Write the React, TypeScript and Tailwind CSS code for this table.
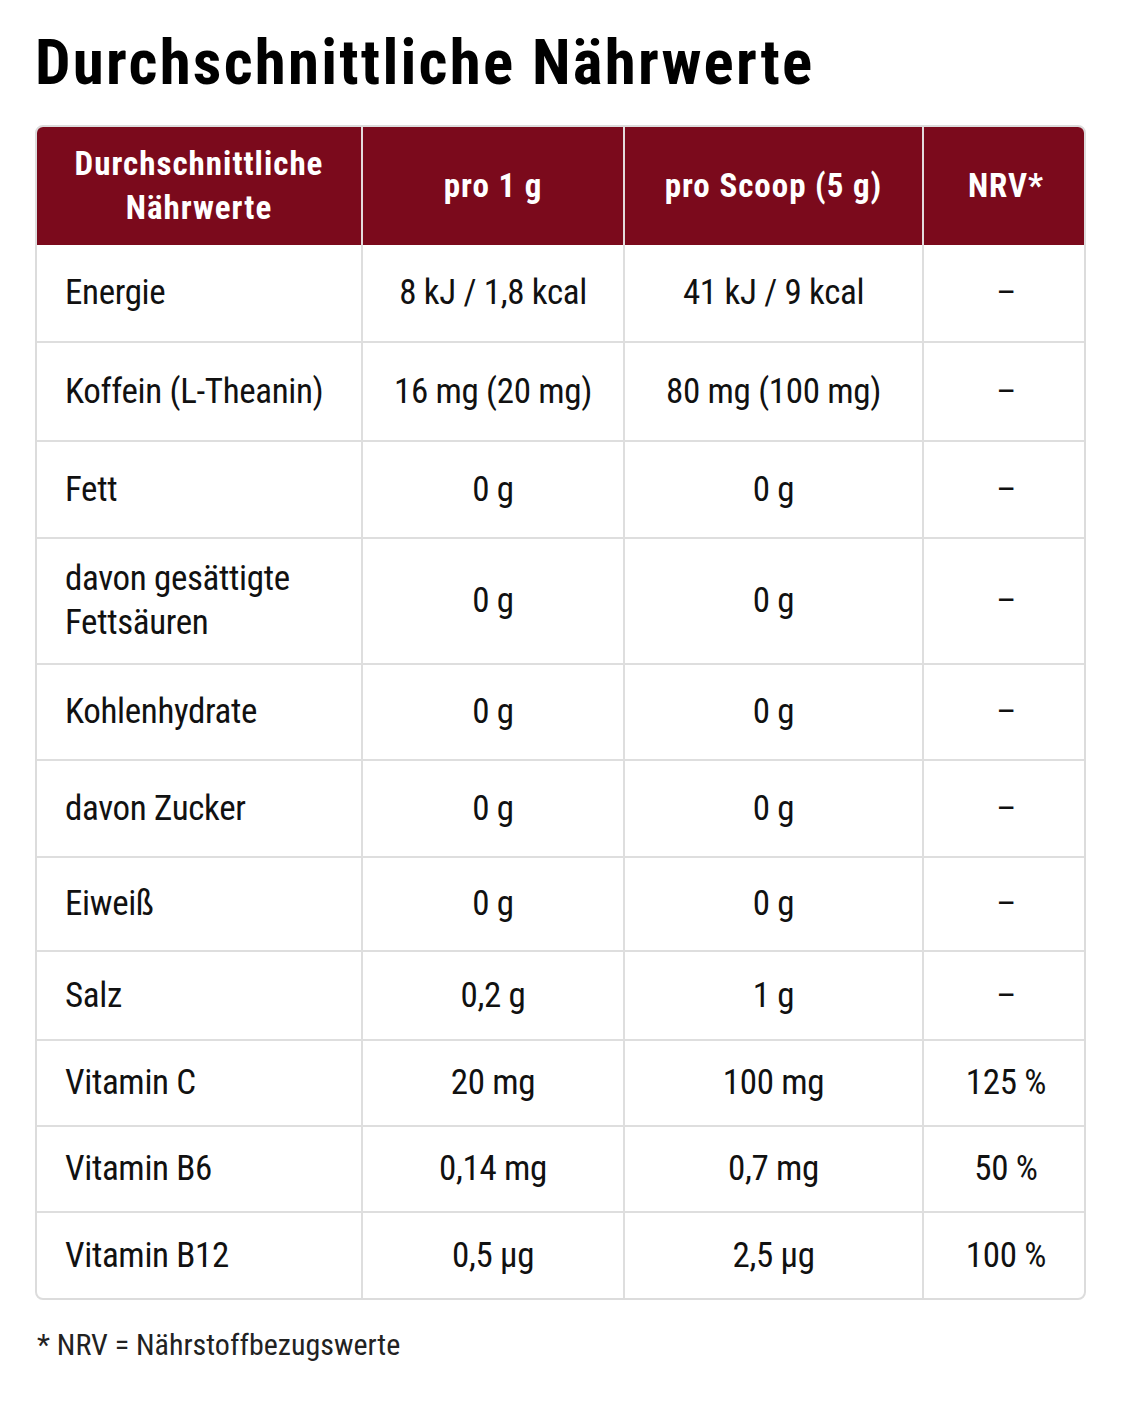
const rows = [
  { name: "Energie", g1: "8 kJ / 1,8 kcal", g5: "41 kJ / 9 kcal", nrv: "–", h: "h-[96px]" },
  { name: "Koffein (L-Theanin)", g1: "16 mg (20 mg)", g5: "80 mg (100 mg)", nrv: "–", h: "h-[99px]" },
  { name: "Fett", g1: "0 g", g5: "0 g", nrv: "–", h: "h-[97px]" },
  { name: "davon gesättigte Fettsäuren", g1: "0 g", g5: "0 g", nrv: "–", h: "h-[126px]" },
  { name: "Kohlenhydrate", g1: "0 g", g5: "0 g", nrv: "–", h: "h-[96px]" },
  { name: "davon Zucker", g1: "0 g", g5: "0 g", nrv: "–", h: "h-[97px]" },
  { name: "Eiweiß", g1: "0 g", g5: "0 g", nrv: "–", h: "h-[94px]" },
  { name: "Salz", g1: "0,2 g", g5: "1 g", nrv: "–", h: "h-[89px]" },
  { name: "Vitamin C", g1: "20 mg", g5: "100 mg", nrv: "125 %", h: "h-[86px]" },
  { name: "Vitamin B6", g1: "0,14 mg", g5: "0,7 mg", nrv: "50 %", h: "h-[86px]" },
  { name: "Vitamin B12", g1: "0,5 µg", g5: "2,5 µg", nrv: "100 %", h: "h-[87px]" },
]

const cols = "grid grid-cols-[326px_262px_299px_164px]"

export default function App() {
  return (
    <div className="min-h-screen bg-white px-[35px] pt-[31px] font-['Roboto_Condensed','Roboto',sans-serif] text-[#111]">
      <h1 className="text-[63px] font-bold leading-none tracking-[0.035em] text-black">Durchschnittliche Nährwerte</h1>

      <div className="mt-[31px] w-[1051px] overflow-hidden rounded-lg border-2 border-[#dcdcdc]">
        <div className={`${cols} h-[118px] bg-[#7b0a1c] text-white font-bold text-[33px] leading-[44px] tracking-[0.03em] text-center`}>
          <div className="flex items-center justify-center border-r-2 border-[#e4dcdc]">
            Durchschnittliche<br />Nährwerte
          </div>
          <div className="flex items-center justify-center border-r-2 border-[#e4dcdc]">pro 1 g</div>
          <div className="flex items-center justify-center border-r-2 border-[#e4dcdc]">pro Scoop (5 g)</div>
          <div className="flex items-center justify-center">NRV*</div>
        </div>

        {rows.map((r, i) => (
          <div
            key={r.name}
            className={`${cols} ${r.h} text-[35px] leading-[44px] tracking-[-0.01em] ${i > 0 ? "border-t-2 border-[#dedede]" : ""}`}
          >
            <div className="flex items-center border-r-2 border-[#dedede] pl-7 pr-6">{r.name}</div>
            <div className="flex items-center justify-center border-r-2 border-[#dedede]">{r.g1}</div>
            <div className="flex items-center justify-center border-r-2 border-[#dedede]">{r.g5}</div>
            <div className="flex items-center justify-center">{r.nrv}</div>
          </div>
        ))}
      </div>

      <p className="mt-[30px] pl-[2px] text-[30px] leading-none text-[#222]">* NRV = Nährstoffbezugswerte</p>
    </div>
  )
}
